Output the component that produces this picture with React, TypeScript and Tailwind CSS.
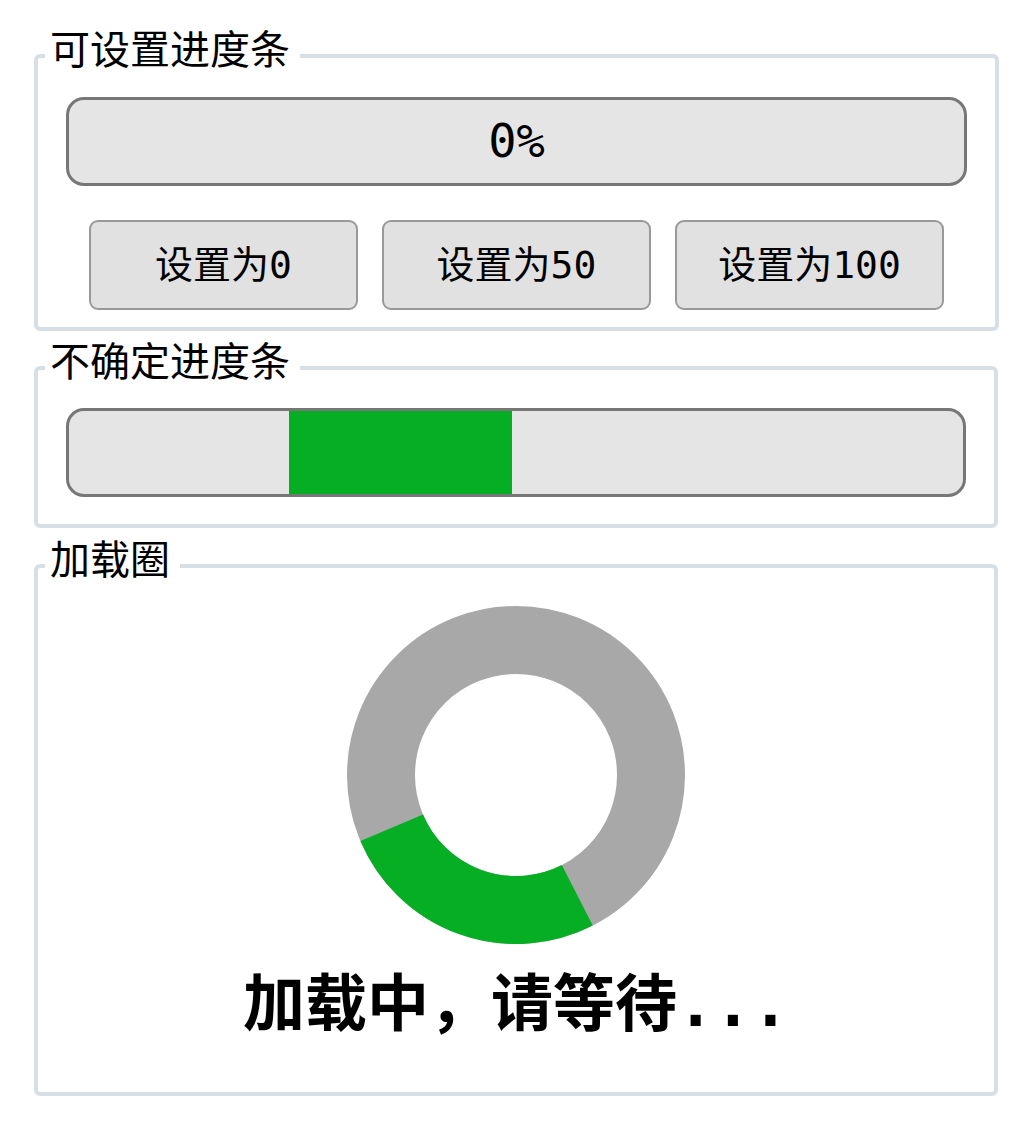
import React from 'react';

const mono = "font-['DejaVu_Sans_Mono','Noto_Sans_CJK_SC',monospace]";

const Group: React.FC<{ title: string; className?: string; children: React.ReactNode }> = ({ title, className, children }) => (
  <fieldset className={`w-[964px] border-4 border-[#d7dfe6] rounded-[6px] px-[28px] ${className ?? ''}`}>
    <legend className={`ml-[-21px] pl-[5px] pr-[10px] pb-[12px] text-[40px] leading-[52px] text-black ${mono}`}>{title}</legend>
    {children}
  </fieldset>
);

const Ring: React.FC = () => {
  const c = 170;
  const r = 135;
  const pt = (deg: number) => {
    const a = (deg * Math.PI) / 180;
    return `${(c + r * Math.cos(a)).toFixed(1)} ${(c + r * Math.sin(a)).toFixed(1)}`;
  };
  return (
    <svg width="340" height="340" viewBox="0 0 340 340">
      <circle cx={c} cy={c} r={r} fill="none" stroke="#a8a8a8" strokeWidth="68" />
      <path d={`M ${pt(63)} A ${r} ${r} 0 0 1 ${pt(157)}`} fill="none" stroke="#06ae24" strokeWidth="68" />
    </svg>
  );
};

export default function App() {
  return (
    <div className={`w-[1024px] h-[1132px] bg-white pt-[24px] pl-[34px] ${mono}`}>
      <Group title="可设置进度条" className="pt-[9px] pb-[17px]">
        <div className="h-[89px] border-[3px] border-[#777777] rounded-[18px] bg-[#e5e5e5] flex items-center justify-center text-[47px] text-black">
          0%
        </div>
        <div className="mt-[34px] px-[23px] flex gap-[24px]">
          {['设置为0', '设置为50', '设置为100'].map((label) => (
            <button
              key={label}
              className="w-[269px] h-[90px] border-2 border-[#999999] rounded-[9px] bg-[#e1e1e1] text-[38px] text-black flex items-center justify-center"
            >
              {label}
            </button>
          ))}
        </div>
      </Group>

      <Group title="不确定进度条" className="mt-[5px] pt-[8px] pb-[27px]">
        <div className="h-[89px] border-[3px] border-[#777777] rounded-[18px] bg-[#e5e5e5] overflow-hidden flex">
          <div className="w-[220px]" />
          <div className="w-[223px] bg-[#06ae24]" />
        </div>
      </Group>

      <Group title="加载圈" className="mt-[6px] pt-[7px] pb-[50px]">
        <div className="flex flex-col items-center">
          <Ring />
          <div className="mt-[23px] text-[62px] leading-[74px] font-bold text-black">加载中，请等待...</div>
        </div>
      </Group>
    </div>
  );
}
